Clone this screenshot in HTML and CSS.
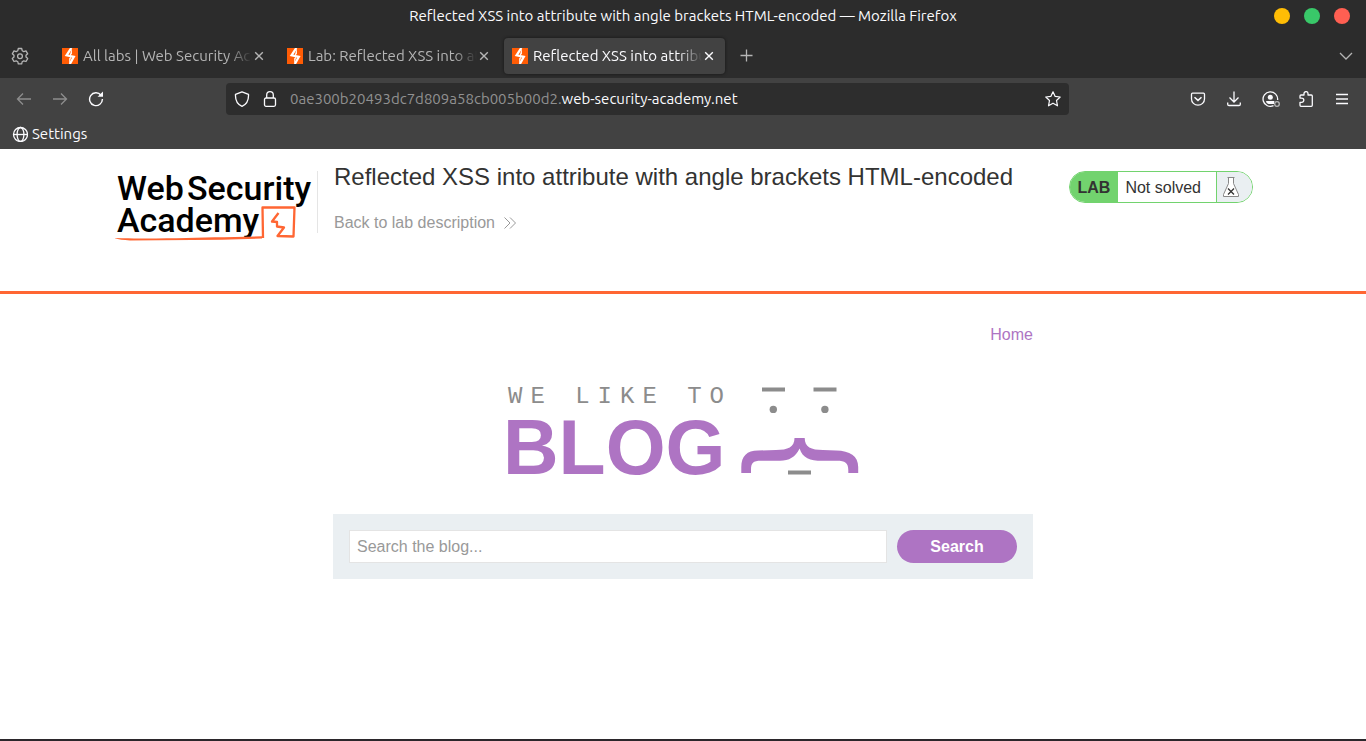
FILE: index.html
```html
<!DOCTYPE html>
<html lang="en">
<head>
<meta charset="utf-8">
<meta name="viewport" content="width=device-width, initial-scale=1">
<title>Reflected XSS into attribute with angle brackets HTML-encoded</title>
<link rel="stylesheet" href="styles.css">
</head>
<body>
<svg class="defs" width="0" height="0" aria-hidden="true">
  <symbol id="bolt" viewBox="0 0 16 16">
    <rect width="16" height="16" fill="#ff5c05"/>
    <path d="M9.300 0L4.600 7.300 11.800 8.900 7.800 16" fill="none" stroke="#fff" stroke-width="2.300"/>
    <path d="M9.900 0V6L7.500 8.100zM7.200 16V10.200L9.500 8.300z" fill="#fff"/>
  </symbol>
  <symbol id="cross" viewBox="0 0 10 10"><path d="M1.200 1.200l7.600 7.600M8.800 1.200L1.200 8.800" stroke="currentColor" stroke-width="1.400" fill="none"/></symbol>
</svg>

<header class="browser">
  <div class="titlebar">
    <p class="window-title">Reflected XSS into attribute with angle brackets HTML-encoded — Mozilla Firefox</p>
    <div class="window-buttons">
      <button class="dot dot-min" aria-label="Minimize"></button>
      <button class="dot dot-max" aria-label="Maximize"></button>
      <button class="dot dot-close" aria-label="Close window"></button>
    </div>
  </div>

  <div class="tabstrip">
    <button class="icon-button gear" aria-label="Firefox View">
      <svg width="18" height="18" viewBox="0 0 18 18" fill="none" stroke="currentColor" stroke-width="1.300" stroke-linejoin="round"><path d="M7.300 1.500h3.400l.5 2.200 1.600.9 2.200-.7 1.700 2.900-1.700 1.500v1.800l1.700 1.500-1.700 2.900-2.200-.7-1.600.9-.5 2.100H7.300l-.5-2.100-1.600-.9-2.200.7-1.700-2.900L3 10.100V8.300L1.300 6.800 3 3.900l2.200.7 1.600-.9z"/><circle cx="9" cy="9.200" r="2.400"/></svg>
    </button>
    <div class="tab">
      <svg class="favicon" aria-hidden="true"><use href="#bolt"/></svg>
      <span class="tab-label">All labs | Web Security Academy</span>
      <button class="tab-close" aria-label="Close tab"><svg width="10" height="10"><use href="#cross"/></svg></button>
    </div>
    <div class="tab">
      <svg class="favicon" aria-hidden="true"><use href="#bolt"/></svg>
      <span class="tab-label">Lab: Reflected XSS into attribute</span>
      <button class="tab-close" aria-label="Close tab"><svg width="10" height="10"><use href="#cross"/></svg></button>
    </div>
    <div class="tab tab-active">
      <svg class="favicon" aria-hidden="true"><use href="#bolt"/></svg>
      <span class="tab-label">Reflected XSS into attribute with</span>
      <button class="tab-close" aria-label="Close tab"><svg width="10" height="10"><use href="#cross"/></svg></button>
    </div>
    <button class="icon-button new-tab" aria-label="New tab">
      <svg width="14" height="14" viewBox="0 0 14 14" stroke="currentColor" stroke-width="1.300"><path d="M6.500 .5v12M.5 6.500h12"/></svg>
    </button>
    <button class="icon-button all-tabs" aria-label="List all tabs">
      <svg width="14" height="8" viewBox="0 0 14 8" fill="none" stroke="currentColor" stroke-width="1.300"><path d="M1 1l6 6 6-6"/></svg>
    </button>
  </div>

  <div class="toolbar">
    <div class="nav-buttons">
      <button class="icon-button muted" aria-label="Back"><svg width="16" height="16" viewBox="0 0 16 16" fill="none" stroke="currentColor" stroke-width="1.300"><path d="M15 8H1.500M7 2.500L1.500 8 7 13.500"/></svg></button>
      <button class="icon-button muted" aria-label="Forward"><svg width="16" height="16" viewBox="0 0 16 16" fill="none" stroke="currentColor" stroke-width="1.300"><path d="M1 8h13.500M9 2.500L14.500 8 9 13.500"/></svg></button>
      <button class="icon-button" aria-label="Reload"><svg width="16" height="16" viewBox="0 0 16 16" fill="none" stroke="currentColor" stroke-width="1.400"><path d="M13 4.200A6.400 6.400 0 1 0 14.400 8"/><path d="M15 .6v5.200H9.600z" fill="currentColor" stroke="none"/></svg></button>
    </div>
    <div class="address">
      <svg width="16" height="16" viewBox="0 0 16 16" fill="none" stroke="currentColor" stroke-width="1.300" stroke-linejoin="round"><path d="M8 .8l6.500 2.500c.3 5.500-1.500 9.800-6.500 12C3 13.100 1.200 8.800 1.500 3.300z"/></svg>
      <svg width="16" height="16" viewBox="0 0 16 16" fill="none" stroke="currentColor" stroke-width="1.300"><rect x="2.500" y="7" width="11" height="8.300" rx="1.500"/><path d="M4.700 7V4a3.300 3.300 0 0 1 6.600 0v3"/></svg>
      <a class="url" href="#"><span class="url-sub">0ae300b20493dc7d809a58cb005b00d2.</span>web-security-academy.net</a>
      <button class="icon-button star" aria-label="Bookmark this page"><svg width="16" height="16" viewBox="0 0 16 16" fill="none" stroke="currentColor" stroke-width="1.200" stroke-linejoin="round"><path d="M8 .8l2.200 4.600 5 .6-3.700 3.500 1 5.300L8 12.200l-4.500 2.600 1-5.300L.8 6l5-.6z"/></svg></button>
    </div>
    <div class="tools">
      <button class="icon-button" aria-label="Save to Pocket"><svg width="16" height="16" viewBox="0 0 16 16" fill="none" stroke="currentColor" stroke-width="1.300"><path d="M2.500 2.200h11q1 0 1 1V8a6.500 6.200 0 0 1-13 0V3.200q0-1 1-1z"/><path d="M4.500 6.200L8 9.400l3.500-3.200" stroke-width="1.500"/></svg></button>
      <button class="icon-button" aria-label="Downloads"><svg width="16" height="16" viewBox="0 0 16 16" fill="none" stroke="currentColor" stroke-width="1.300"><path d="M8 .5v10.500M3.500 6.500L8 11l4.500-4.500M1.700 11.500v1.700q0 1.300 1.300 1.300h10q1.300 0 1.300-1.300v-1.700"/></svg></button>
      <button class="icon-button" aria-label="Account"><svg class="account" width="16" height="16" viewBox="0 0 16 16" fill="none" stroke="currentColor" stroke-width="1.300"><path d="M11.500 14.700A7.300 7.300 0 1 1 15.600 9"/><circle cx="8.300" cy="6.200" r="2.500" fill="currentColor" stroke="none"/><path d="M4 10h8.500l-.5 1.200 0 1.800H6.500Q4 12.500 4 10z" fill="currentColor" stroke="none"/><circle cx="15" cy="13" r="2.300" stroke="#b8b8b8"/></svg></button>
      <button class="icon-button" aria-label="Extensions"><svg width="16" height="16" viewBox="0 0 16 16" fill="none" stroke="currentColor" stroke-width="1.300" stroke-linejoin="round"><path d="M2 7V5q0-1 1-1h3V2.600a2 2 0 0 1 4 0V4h3.300q1 0 1 1v9.300q0 1-1 1H3q-1 0-1-1v-3h1.700a2.100 2.100 0 0 0 0-4.200z"/></svg></button>
      <button class="icon-button" aria-label="Open menu"><svg width="16" height="16" viewBox="0 0 16 16" stroke="currentColor" stroke-width="1.300"><path d="M2 3.500h12M2 8h12M2 12.500h12"/></svg></button>
    </div>
  </div>

  <nav class="bookmarks">
    <a class="bookmark" href="#">
      <svg width="16" height="16" viewBox="0 0 16 16" fill="none" stroke="currentColor" stroke-width="1.300"><circle cx="8.500" cy="8.500" r="7"/><ellipse cx="8.500" cy="8.500" rx="3.400" ry="7"/><path d="M1.500 8.500h14"/></svg>
      Settings
    </a>
  </nav>
</header>

<div class="page">
  <section class="lab-header">
    <div class="lab-inner">
      <a class="academy-logo" href="#" aria-label="Web Security Academy">
        <svg width="202" height="74" viewBox="1 1 202 74">
          <g class="academy-type">
            <text x="3" y="30">Web</text>
            <text x="73" y="30">Security</text>
            <text x="3" y="62">Academy</text>
          </g>
          <path d="M0 68L8 68.300C50 69 78 67.600 110 67.300L148 66.300V68.500L108 69.800 16 70.500Q5 70 0 68z" fill="#ff6633"/>
          <path d="M149 68L148.500 37.500H180.500L179.500 66.500 163.500 66 170 57.500 163 56.500V52L158 51.500 164.500 43" fill="none" stroke="#ff6633" stroke-width="2.300" stroke-linejoin="round"/>
        </svg>
      </a>
      <div class="lab-title">
        <h1>Reflected XSS into attribute with angle brackets HTML-encoded</h1>
        <a class="back-link" href="#">Back to lab description
          <svg width="13" height="12" viewBox="0 0 13 12" fill="none" stroke="currentColor" stroke-width="1"><path d="M1.500 .5L7 6 1.500 11.500M7 .5L12.500 6 7 11.500"/></svg>
        </a>
      </div>
      <div class="lab-status">
        <strong>LAB</strong>
        <span>Not solved</span>
        <i class="flask"><svg width="16" height="20" viewBox="0 0 16 20" fill="#fff" stroke="#888" stroke-width="1"><path d="M4.500 .5h7M5.500 .5v6L.5 17.500v2h15v-2l-5-11v-6"/><path d="M5 11.500l6 6M11 11.500l-6 6" stroke="#333" stroke-width="1.300"/></svg></i>
      </div>
    </div>
  </section>

  <main class="blog">
    <nav class="blog-nav"><a href="#">Home</a></nav>
    <div class="blog-logo">
      <svg width="352" height="92" viewBox="507 386 352 92" role="img" aria-label="We like to blog">
        <text class="tagline" x="508" y="403">WE LIKE TO</text>
        <text class="wordmark" x="503" y="474">BLOG</text>
        <g fill="#8c8c8c">
          <rect x="762" y="387.500" width="23" height="4"/>
          <rect x="813.500" y="387.500" width="23" height="4"/>
          <circle cx="773.300" cy="409.400" r="3.700"/>
          <circle cx="824.900" cy="409.400" r="3.700"/>
          <rect x="788" y="470.500" width="23" height="4"/>
        </g>
        <path fill="#ae74c3" d="M741.300 473V467C741.300 456 747 450.500 758 450.500L776 450C788 450 794.500 447 794.500 438H804.700C804.700 447 811 450 823 450L836 450.500C850 450.800 858.200 456 858.200 467V473H848.300V470C848.300 463 845 460.800 837 460.800H822C810 460.800 802.500 458 799.600 448.500C795.500 457 789 460.800 780 460.800H761C753 460.800 751 463 751 470V473z"/>
      </svg>
    </div>
    <form class="search">
      <input type="text" placeholder="Search the blog..." aria-label="Search the blog">
      <button type="button">Search</button>
    </form>
  </main>
</div>
</body>
</html>
```
FILE: styles.css
```css
* {
  box-sizing: border-box;
}

body {
  margin: 0;
  min-height: 100vh;
  display: flex;
  flex-direction: column;
  background: #fff;
  color: #333332;
  font: 16px/20px "Liberation Sans", Arial, sans-serif;
}

a {
  color: inherit;
  text-decoration: none;
}

button {
  margin: 0;
  padding: 0;
  border: 0;
  background: none;
  color: inherit;
  font: inherit;
}

svg {
  display: block;
  flex: none;
}

.defs {
  position: absolute;
}

.browser {
  background: #424242;
  color: #fbfbfe;
  font: 15px/20px Ubuntu, "Noto Sans", sans-serif;
}

.titlebar {
  display: grid;
  grid-template-columns: 1fr auto 1fr;
  align-items: center;
  height: 32px;
  padding: 0 16px;
  background: #2c2c2c;
}

.window-title {
  grid-column: 2;
  margin: 0;
}

.window-buttons {
  display: flex;
  justify-content: flex-end;
  gap: 14px;
}

.dot {
  width: 16px;
  height: 16px;
  border-radius: 50%;
}

.dot-min { background: #ffbd05; }
.dot-max { background: #39c869; }
.dot-close { background: #ff5f52; }

.tabstrip {
  display: flex;
  align-items: center;
  gap: 4px;
  height: 46px;
  padding: 2px 12px 0 11px;
  background: #2c2c2c;
  color: #b5b5b5;
}

.icon-button {
  display: flex;
  align-items: center;
  justify-content: center;
}

.gear {
  margin-right: 21px;
}

.tab {
  display: flex;
  align-items: center;
  width: 221px;
  height: 36px;
  padding: 0 11px 0 8px;
  border-radius: 4px;
}

.tab-active {
  background: #424242;
  color: #fbfbfe;
  box-shadow: 0 0 3px #151515;
}

.favicon {
  width: 16px;
  height: 16px;
  margin-right: 5px;
}

.tab-label {
  flex: 1;
  overflow: hidden;
  line-height: 22px;
  white-space: nowrap;
  mask-image: linear-gradient(to left, transparent, #000 24px);
}

.tab-close {
  margin-left: 2px;
}

.new-tab {
  margin-left: 11px;
}

.all-tabs {
  margin-left: auto;
  padding-right: 1px;
}

.toolbar {
  display: grid;
  grid-template-columns: 210px minmax(0, 843px) minmax(181px, 1fr);
  align-items: center;
  justify-content: space-between;
  height: 42px;
  padding: 0 16px;
}

.nav-buttons {
  display: flex;
  gap: 20px;
}

.muted {
  color: #8d8d8d;
}

.address {
  display: flex;
  align-items: center;
  gap: 12px;
  height: 32px;
  padding: 0 8px;
  border-radius: 4px;
  background: #2d2d2d;
}

.url {
  flex: 1;
  min-width: 0;
  overflow: hidden;
  line-height: 22px;
  white-space: nowrap;
}

.url-sub {
  color: #919191;
}

.tools {
  display: flex;
  justify-content: flex-end;
  gap: 20px;
}

.account {
  overflow: visible;
}

.bookmarks {
  display: flex;
  align-items: flex-start;
  height: 29px;
  padding: 4px 12px 5px;
}

.bookmark {
  display: flex;
  align-items: center;
  gap: 4px;
}

.page {
  flex: 1;
  border-bottom: 2px solid #2b272b;
}

.lab-header {
  border-bottom: 3px solid #ff6633;
}

.lab-inner {
  display: flex;
  align-items: flex-start;
  max-width: 1140px;
  min-height: 142px;
  margin: 0 auto;
  padding: 22px 0 0 2px;
}

.academy-type {
  font-family: Roboto, sans-serif;
  font-size: 34px;
  font-weight: 500;
  fill: #000;
}

.lab-title {
  flex: 1;
  padding-left: 16px;
  border-left: 1px solid #e5e5e5;
}

.lab-title h1 {
  margin: -8px 0 22px;
  font-size: 24px;
  font-weight: 400;
  line-height: 28px;
}

.back-link {
  display: flex;
  align-items: center;
  gap: 8px;
  color: #999;
}

.lab-status {
  display: flex;
  align-items: stretch;
  height: 32px;
  overflow: hidden;
  border: 1px solid #72d36e;
  border-radius: 16px;
  line-height: 32px;
}

.lab-status strong {
  padding: 0 8px;
  background: #72d36e;
}

.lab-status span {
  padding: 0 15px 0 7px;
}

.flask {
  display: flex;
  align-items: center;
  padding: 0 13px 0 6px;
  border-left: 1px solid #72d36e;
  background: #eaeff2;
}

.blog {
  max-width: 700px;
  margin: 0 auto;
  padding: 31px 0 30px;
}

.blog-nav {
  display: flex;
  justify-content: flex-end;
  color: #ae74c3;
}

.blog-logo {
  display: flex;
  justify-content: center;
  padding: 41px 0 36px;
}

.tagline {
  font-family: "Liberation Mono", monospace;
  font-size: 24px;
  letter-spacing: 8px;
  fill: #8c8c8c;
}

.wordmark {
  font-size: 77px;
  font-weight: 700;
  fill: #ae74c3;
}

.search {
  display: flex;
  gap: 10px;
  padding: 16px;
  background: #eaeff2;
}

.search input {
  flex: 1;
  min-width: 0;
  height: 33px;
  padding: 0 7px;
  border: 1px solid #e4e4e4;
  background: #fff;
  color: #333332;
  font: inherit;
}

.search input::placeholder {
  color: #999;
}

.search button {
  width: 120px;
  border-radius: 17px;
  background: #ae74c3;
  color: #fff;
  font-weight: 700;
}
```
